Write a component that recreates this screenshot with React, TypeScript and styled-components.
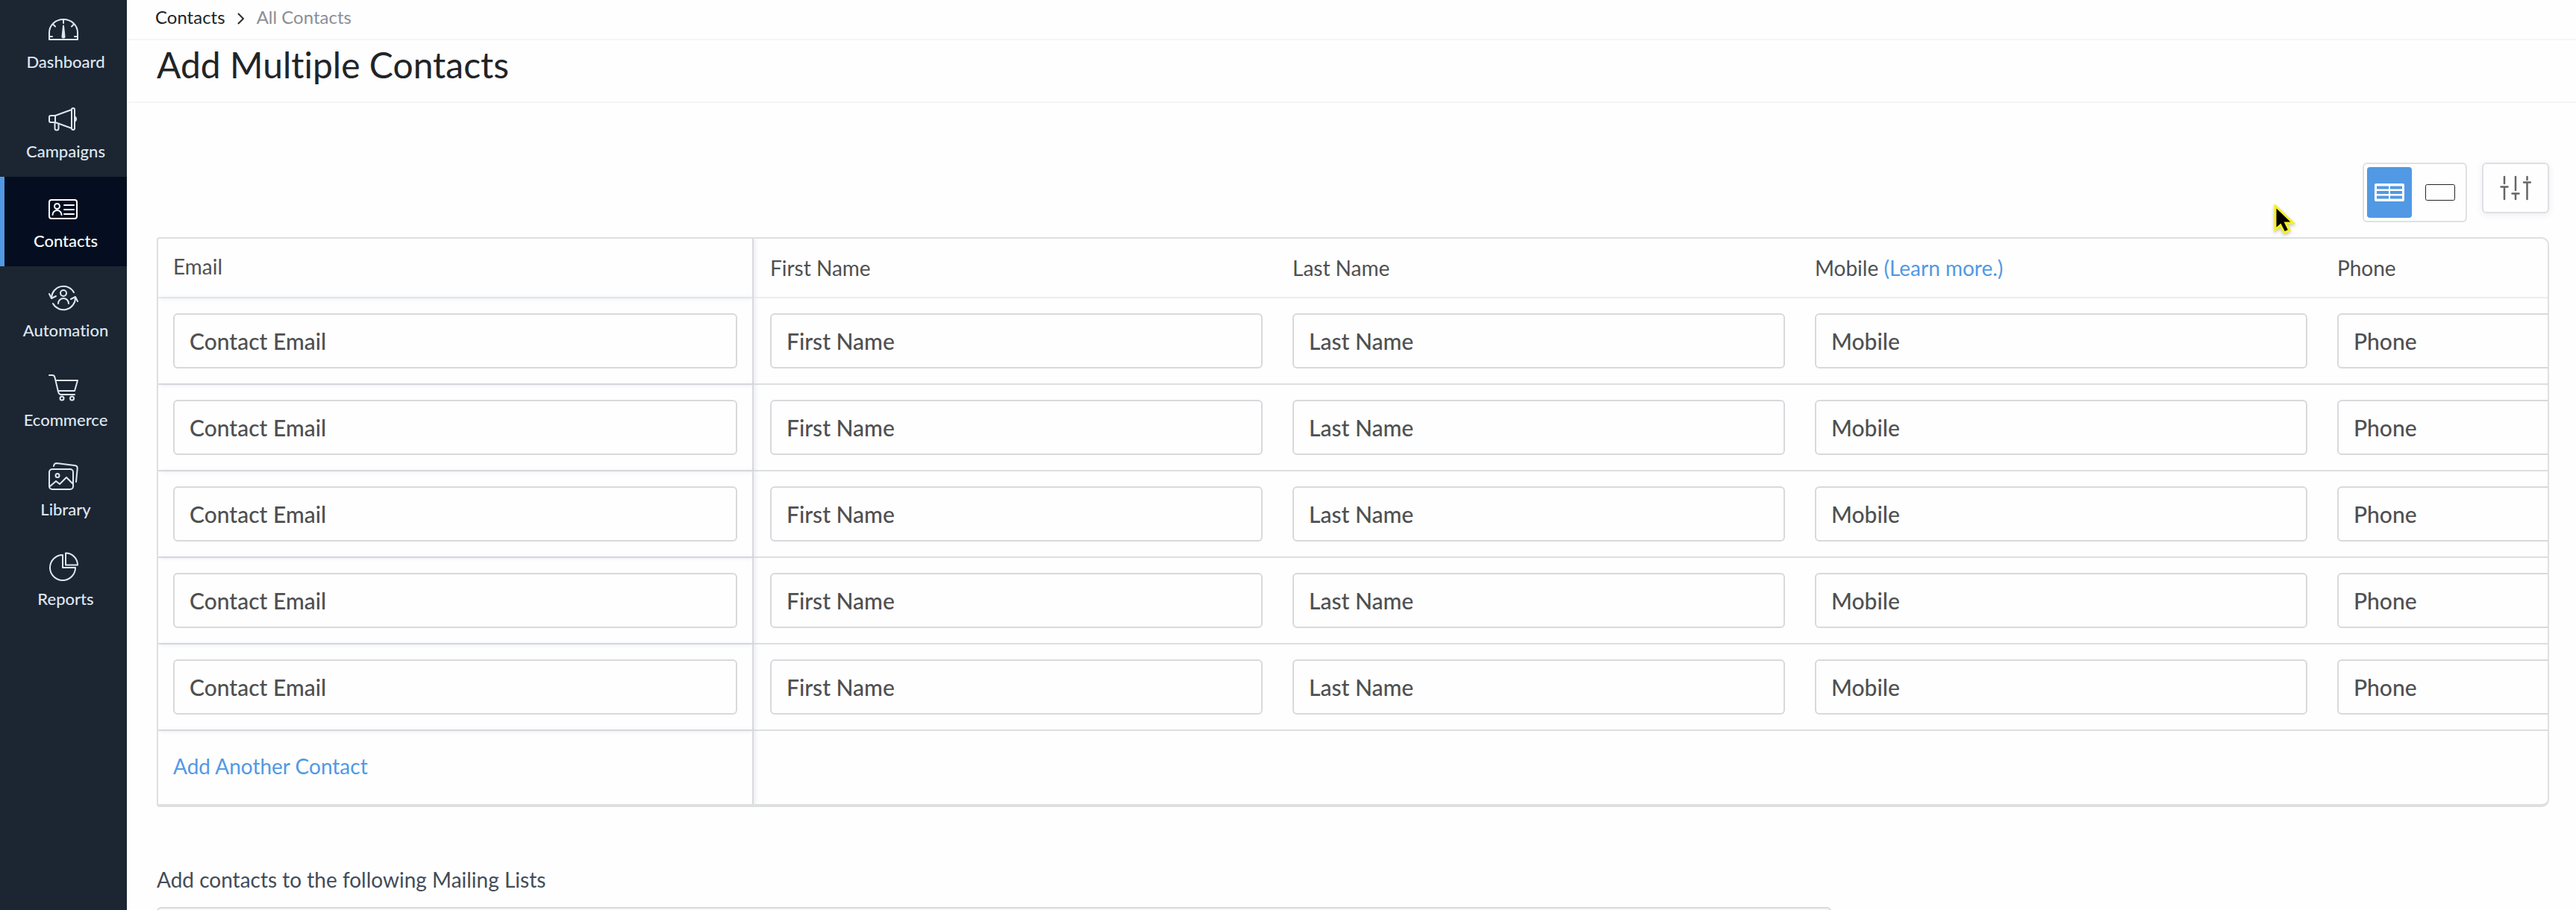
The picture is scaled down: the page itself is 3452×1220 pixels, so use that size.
import React from "react";
import styled, { createGlobalStyle } from "styled-components";

const GlobalStyle = createGlobalStyle`
  * { box-sizing: border-box; }
  body {
    margin: 0;
    background: #fefefe;
    color: #4f5051;
    font-family: Lato, "Liberation Sans", sans-serif;
    font-variant-ligatures: none;
    overflow: hidden;
  }
`;

const Shell = styled.div`
  display: flex;
  height: 100vh;
  overflow: hidden;
`;

const Sidebar = styled.nav`
  flex: 0 0 170px;
  margin-top: -3px;
  background: #1c2632;
`;

const NavItem = styled.a<{ $active?: boolean }>`
  display: flex;
  flex-direction: column;
  align-items: center;
  height: 120px;
  padding-top: 20px;
  border-left: 6px solid ${(p) => (p.$active ? "#5199e4" : "transparent")};
  background: ${(p) => (p.$active ? "#040e20" : "transparent")};
  color: ${(p) => (p.$active ? "#ffffff" : "#dfe6f3")};
  font-size: 22px;
  font-weight: 500;
  line-height: 28px;
  text-decoration: none;

  svg {
    width: 48px;
    height: 48px;
    margin-right: 6px;
    margin-bottom: 4px;
    fill: none;
    stroke: currentColor;
    stroke-width: 2;
    stroke-linecap: round;
    stroke-linejoin: round;
  }
`;

const Main = styled.main`
  flex: 1;
  min-width: 0;
`;

const Breadcrumb = styled.nav`
  display: flex;
  align-items: center;
  gap: 16px;
  height: 54px;
  padding: 0 38px 6px;
  border-bottom: 2px solid #f5f5f7;
  font-size: 24px;
  line-height: 30px;

  svg {
    width: 10px;
    height: 16px;
    margin-top: 4px;
    fill: none;
    stroke: #2a2d30;
    stroke-width: 2;
  }
`;

const Crumb = styled.a<{ $current?: boolean }>`
  color: ${(p) => (p.$current ? "#8b8f96" : "#222426")};
  text-decoration: none;
`;

const TitleBar = styled.header`
  height: 84px;
  padding: 3px 40px;
  border-bottom: 2px solid #f5f5f7;
`;

const Title = styled.h1`
  margin: 0;
  color: #222426;
  font-size: 48px;
  font-weight: 400;
  line-height: 60px;
`;

const Content = styled.div`
  padding: 80px 36px 0 40px;
`;

const Toolbar = styled.div`
  display: flex;
  justify-content: flex-end;
  align-items: flex-start;
  gap: 20px;
  margin-bottom: 20px;
`;

const ViewSwitch = styled.div`
  display: flex;
  gap: 8px;
  height: 80px;
  padding: 4px;
  border: 2px solid #dfe0e3;
  border-radius: 6px;
`;

const ViewButton = styled.button<{ $active?: boolean }>`
  display: flex;
  align-items: center;
  justify-content: center;
  width: 60px;
  height: 68px;
  padding: 0;
  border: 0;
  border-radius: 4px;
  background: ${(p) => (p.$active ? "#5199e4" : "transparent")};
  color: ${(p) => (p.$active ? "#ffffff" : "#222428")};
`;

const SettingsButton = styled.button`
  display: flex;
  align-items: center;
  justify-content: center;
  width: 90px;
  height: 68px;
  padding: 0;
  border: 2px solid #dfe0e3;
  border-radius: 6px;
  background: #fefefe;
  box-shadow: 0 2px 8px rgba(40, 60, 110, 0.09);
  color: #646567;
`;

const TableFrame = styled.div`
  overflow: hidden;
  border: 2px solid #dedfdf;
  border-bottom-width: 4px;
  border-radius: 4px 10px 10px 4px;
`;

const Table = styled.table`
  table-layout: fixed;
  width: 3600px;
  border-collapse: separate;
  border-spacing: 0;
`;

const EmailCol = styled.col`
  width: 798px;
`;

const FirstCol = styled.col`
  width: 702px;
`;

const HeadCell = styled.th<{ $pinned?: boolean; $lead?: boolean }>`
  height: 80px;
  padding: ${(p) => (p.$pinned ? "0 20px 4px" : "0 20px")};
  padding-left: ${(p) => (p.$lead ? 22 : 20)}px;
  border-bottom: 2px solid #ececec;
  border-right: ${(p) => (p.$pinned ? "2px solid #d9dadd" : "0")};
  box-shadow: ${(p) => (p.$pinned ? "2px 0 6px rgba(40, 60, 110, 0.1)" : "none")};
  font-size: 28px;
  font-weight: 400;
  line-height: 34px;
  text-align: left;
`;

const Cell = styled.td<{ $pinned?: boolean; $lead?: boolean }>`
  height: 116px;
  padding: 0 20px;
  padding-left: ${(p) => (p.$lead ? 22 : 20)}px;
  border-bottom: 2px solid #dddee0;
  border-right: ${(p) => (p.$pinned ? "2px solid #d9dadd" : "0")};
  box-shadow: ${(p) => (p.$pinned ? "2px 0 6px rgba(40, 60, 110, 0.1)" : "none")};
`;

const FootCell = styled.td<{ $pinned?: boolean }>`
  height: 98px;
  padding: 0 20px 4px;
  border-right: ${(p) => (p.$pinned ? "2px solid #d9dadd" : "0")};
  box-shadow: ${(p) => (p.$pinned ? "2px 0 6px rgba(40, 60, 110, 0.1)" : "none")};
`;

const Field = styled.input`
  display: block;
  width: 100%;
  height: 74px;
  padding: 0 20px;
  border: 2px solid #d8d9dc;
  border-radius: 6px;
  background: #fefefe;
  color: #4f5051;
  font-family: inherit;
  font-size: 30px;
  font-weight: 500;

  &::placeholder {
    color: #4f5051;
    opacity: 1;
  }
`;

const TextLink = styled.a`
  color: #5199e4;
  text-decoration: none;
`;

const AddButton = styled.button`
  display: block;
  padding: 0;
  border: 0;
  background: none;
  color: #5199e4;
  font-family: inherit;
  font-size: 28px;
  line-height: 34px;
`;

const MailingLists = styled.section`
  width: 70%;
  padding-top: 80px;
`;

const ListLabel = styled.label`
  display: block;
  margin-bottom: 20px;
  color: #434c5a;
  font-size: 28px;
  line-height: 34px;
`;

const ListPicker = styled.input`
  display: block;
  width: 100%;
  height: 74px;
  border: 2px solid #d8d9dc;
  border-radius: 6px;
  background: #f4f6f8;
`;

const Pointer = styled.svg`
  position: absolute;
  top: 274px;
  right: 376px;
  width: 30px;
  height: 42px;
  filter: drop-shadow(0 2px 2px rgba(0, 0, 0, 0.25));
`;

const DashboardIcon = () => (
  <svg viewBox="0 0 48 48">
    <path d="M5 36V27C5 17 13 9 24 9S43 17 43 27V36Z" />
    <path d="M24 10v4M10.500 16l2.500 2.500M37.500 16l-2.500 2.500M5 32h4M39 32h4" />
    <path d="M24 17.500 22.500 32a1.500 1.500 0 0 0 3 0Z" fill="currentColor" />
  </svg>
);

const CampaignIcon = () => (
  <svg viewBox="0 0 48 48">
    <path d="M13 18H7a2 2 0 0 0-2 2v5a2 2 0 0 0 2 2h6M13 18v9l22 8V10Z" />
    <rect x="35" y="8" width="4" height="29" rx="2" />
    <path d="M39 19a4 4 0 0 1 0 7M12.500 27v8a2.500 2.500 0 0 0 5 0v-6" />
  </svg>
);

const ContactsIcon = () => (
  <svg viewBox="0 0 48 48">
    <rect x="5" y="11" width="37" height="25" rx="3" />
    <circle cx="15.500" cy="19.500" r="3.500" />
    <path d="M9.500 31a6 6 0 0 1 12 0M25 18h13M25 24h13M25 30h13" />
  </svg>
);

const AutomationIcon = () => (
  <svg viewBox="0 0 48 48">
    <circle cx="24" cy="16" r="4" />
    <path d="M17 30a7 7 0 0 1 14 0" />
    <path d="M38 15A16 16 0 0 0 8 22M10 30a16 16 0 0 0 30-8" />
    <path d="M5 17l3 6 6-3M34 24l6-3 3 6" />
  </svg>
);

const CartIcon = () => (
  <svg viewBox="0 0 48 48">
    <path d="M5 6h4q3 0 3.500 3L17 28q.8 4 4 4h18M13.500 13H43l-4 14H16.500" />
    <circle cx="22" cy="37" r="2.500" />
    <circle cx="35.500" cy="37" r="2.500" />
  </svg>
);

const LibraryIcon = () => (
  <svg viewBox="0 0 48 48">
    <rect x="5" y="12" width="32" height="27" rx="4" />
    <path d="M11 8q.5-4 4-4l24 3q4 .5 3.700 4L41 29" />
    <circle cx="16" cy="20.500" r="2.500" />
    <path d="M6 35l8-7 5 4 9-9 8 8" />
  </svg>
);

const ReportsIcon = () => (
  <svg viewBox="0 0 48 48">
    <path d="M23 7A17 17 0 1 0 40 24H23Z" />
    <path d="M27 4.500A16 16 0 0 1 43 20.500H27Z" />
  </svg>
);

const navigation = [
  { label: "Dashboard", Icon: DashboardIcon },
  { label: "Campaigns", Icon: CampaignIcon },
  { label: "Contacts", Icon: ContactsIcon, active: true },
  { label: "Automation", Icon: AutomationIcon },
  { label: "Ecommerce", Icon: CartIcon },
  { label: "Library", Icon: LibraryIcon },
  { label: "Reports", Icon: ReportsIcon },
];

const fields = ["Contact Email", "First Name", "Last Name", "Mobile", "Phone"];
const rows = [1, 2, 3, 4, 5];

export default function App() {
  return (
    <Shell>
      <GlobalStyle />
      <Sidebar>
        {navigation.map(({ label, Icon, active }) => (
          <NavItem key={label} href="#" $active={active}>
            <Icon />
            {label}
          </NavItem>
        ))}
      </Sidebar>
      <Main>
        <Breadcrumb>
          <Crumb href="#">Contacts</Crumb>
          <svg viewBox="0 0 10 16">
            <path d="M1 1l7 7-7 7" />
          </svg>
          <Crumb href="#" $current>
            All Contacts
          </Crumb>
        </Breadcrumb>
        <TitleBar>
          <Title>Add Multiple Contacts</Title>
        </TitleBar>
        <Content>
          <Toolbar>
            <ViewSwitch>
              <ViewButton $active aria-label="Table view">
                <svg width="40" height="24" viewBox="0 0 40 24">
                  <rect width="40" height="24" rx="2" fill="currentColor" />
                  <path d="M3 5.500h16M21 5.500h16M3 12h16M21 12h16M3 18.500h16M21 18.500h16" stroke="#5199e4" strokeWidth="4" />
                </svg>
              </ViewButton>
              <ViewButton aria-label="Card view">
                <svg width="40" height="22" viewBox="0 0 40 22" fill="none" stroke="currentColor">
                  <rect x="0.500" y="0.500" width="39" height="21" rx="2" />
                </svg>
              </ViewButton>
            </ViewSwitch>
            <SettingsButton aria-label="Column settings">
              <svg width="42" height="34" viewBox="0 0 42 34" fill="none" stroke="currentColor" strokeWidth="2.500" strokeLinecap="round">
                <path d="M6 2v9M1.500 15.500h9M6 16v16M21 2v18M16.500 24.500h9M21 25v7M36.500 2v4M32 9.500h9M36.500 10v22" />
              </svg>
            </SettingsButton>
          </Toolbar>
          <TableFrame>
            <Table>
              <colgroup>
                <EmailCol />
                <FirstCol />
                <col />
                <col />
                <col />
              </colgroup>
              <thead>
                <tr>
                  <HeadCell $pinned>Email</HeadCell>
                  <HeadCell $lead>First Name</HeadCell>
                  <HeadCell>Last Name</HeadCell>
                  <HeadCell>
                    Mobile <TextLink href="#">(Learn more.)</TextLink>
                  </HeadCell>
                  <HeadCell>Phone</HeadCell>
                </tr>
              </thead>
              <tbody>
                {rows.map((row) => (
                  <tr key={row}>
                    {fields.map((field, i) => (
                      <Cell key={field} $pinned={i === 0} $lead={i === 1}>
                        <Field placeholder={field} aria-label={`${field} ${row}`} />
                      </Cell>
                    ))}
                  </tr>
                ))}
              </tbody>
              <tfoot>
                <tr>
                  <FootCell $pinned>
                    <AddButton>Add Another Contact</AddButton>
                  </FootCell>
                  <FootCell colSpan={4} />
                </tr>
              </tfoot>
            </Table>
          </TableFrame>
          <MailingLists>
            <ListLabel htmlFor="lists">Add contacts to the following Mailing Lists</ListLabel>
            <ListPicker id="lists" />
          </MailingLists>
        </Content>
      </Main>
      <Pointer viewBox="0 0 30 42">
        <path d="M3 2V34L10 28 15 38 22 35 17 25H27Z" fill="#000" stroke="#f7f01e" strokeWidth="3" />
      </Pointer>
    </Shell>
  );
}
